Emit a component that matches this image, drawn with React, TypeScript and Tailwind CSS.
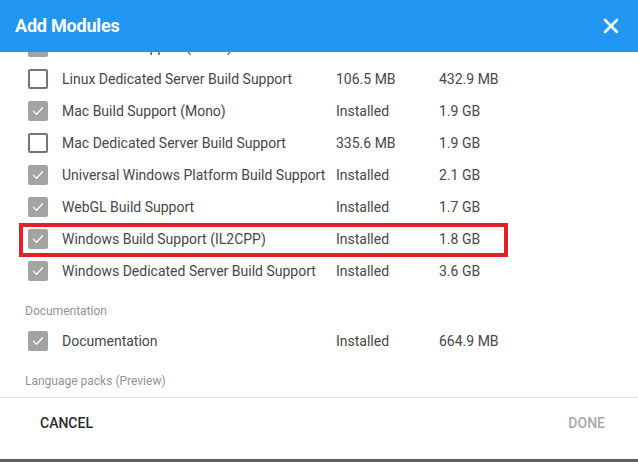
import React from "react";

type Row = { label: string; size: string; total: string; checked: boolean };

const rows: Row[] = [
  { label: "Linux Build Support (Mono)", size: "Installed", total: "1.9 GB", checked: true },
  { label: "Linux Dedicated Server Build Support", size: "106.5 MB", total: "432.9 MB", checked: false },
  { label: "Mac Build Support (Mono)", size: "Installed", total: "1.9 GB", checked: true },
  { label: "Mac Dedicated Server Build Support", size: "335.6 MB", total: "1.9 GB", checked: false },
  { label: "Universal Windows Platform Build Support", size: "Installed", total: "2.1 GB", checked: true },
  { label: "WebGL Build Support", size: "Installed", total: "1.7 GB", checked: true },
  { label: "Windows Build Support (IL2CPP)", size: "Installed", total: "1.8 GB", checked: true },
  { label: "Windows Dedicated Server Build Support", size: "Installed", total: "3.6 GB", checked: true },
];

function Box({ checked }: { checked: boolean }) {
  if (checked) {
    return (
      <div className="w-[20px] h-[20px] rounded-[2px] bg-[#a3a3a3] flex items-center justify-center shrink-0">
        <svg width="14" height="14" viewBox="0 0 14 14" fill="none">
          <path d="M2.5 7.2 L5.6 10.2 L11.5 3.8" stroke="white" strokeWidth="1.4" strokeLinecap="round" strokeLinejoin="round" />
        </svg>
      </div>
    );
  }
  return <div className="w-[20px] h-[20px] rounded-[2px] border-2 border-[#767676] shrink-0" />;
}

function ModuleRow({ r }: { r: Row }) {
  return (
    <div className="h-8 flex items-center pl-[28px] text-[14px] text-[#474747]">
      <Box checked={r.checked} />
      <div className="w-[288px] pl-[14px] whitespace-nowrap">{r.label}</div>
      <div className="w-[103px] whitespace-nowrap">{r.size}</div>
      <div className="whitespace-nowrap">{r.total}</div>
    </div>
  );
}

export default function App() {
  return (
    <div
      className="w-[638px] h-[462px] bg-white flex flex-col overflow-hidden"
      style={{ fontFamily: "Roboto, 'Noto Sans', sans-serif" }}
    >
      <div className="h-[52px] bg-[#2196f3] flex items-center justify-between pl-[15px] pr-[15px] pb-[1px] shrink-0 relative z-10">
        <div className="text-white text-[18px] font-bold tracking-[-0.2px]">Add Modules</div>
        <svg width="24" height="24" viewBox="0 0 24 24" fill="none" stroke="white" strokeWidth="2.6" strokeLinecap="round">
          <path d="M18 6 L6 18" />
          <path d="M6 6 L18 18" />
        </svg>
      </div>
      <div className="h-[345px] overflow-hidden relative shrink-0">
        <div className="mt-[-21px] relative">
          {rows.map((r) => (
            <ModuleRow key={r.label} r={r} />
          ))}
          <div className="pl-[25px] pt-[16px] pb-[6px] text-[12px] leading-4 text-[#949494]">Documentation</div>
          <ModuleRow r={{ label: "Documentation", size: "Installed", total: "664.9 MB", checked: true }} />
          <div className="pl-[25px] pt-[16px] pb-[6px] text-[12px] leading-4 text-[#949494]">Language packs (Preview)</div>
          <div className="absolute left-[19px] top-[192px] w-[489px] h-[34px] border-4 border-[#e2202b]" />
        </div>
      </div>
      <div className="h-px bg-[#e0e0e0] shrink-0" />
      <div className="h-[61px] flex items-center justify-between pl-[40px] pr-[33px] pb-[11px] text-[14px] font-medium shrink-0">
        <div className="text-[#2a2a2a]">CANCEL</div>
        <div className="text-[#a8a8a8]">DONE</div>
      </div>
      <div className="h-[3px] bg-[#616161] shrink-0" />
    </div>
  );
}
